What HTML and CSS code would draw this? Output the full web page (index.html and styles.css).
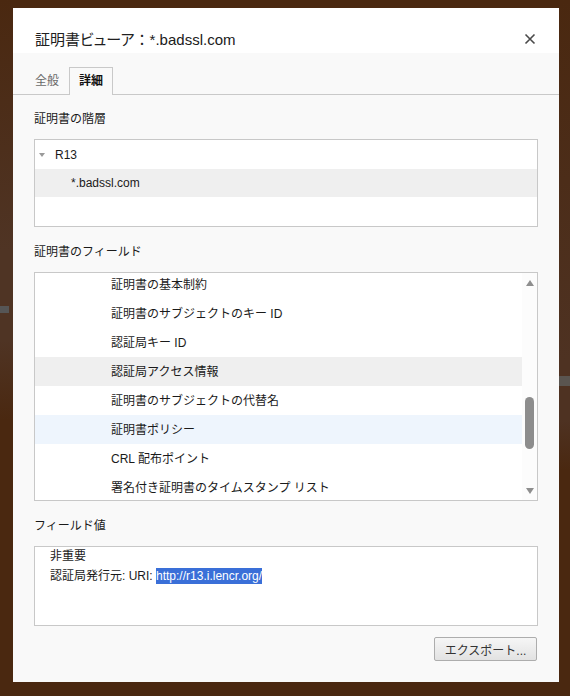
FILE: index.html
```html
<!DOCTYPE html>
<html lang="ja">
<head>
<meta charset="utf-8">
<title>証明書ビューア</title>
<link rel="stylesheet" href="styles.css">
</head>
<body>
<div class="dialog">
  <div class="header">
    <div class="title">証明書ビューア<span class="colon">：</span>*.badssl.com</div>
    <svg class="close" width="12" height="12" viewBox="0 0 12 12"><path d="M1.5 1.5 L10.5 10.5 M10.5 1.5 L1.5 10.5" stroke="#4a4a4a" stroke-width="1.6" fill="none"/></svg>
  </div>
  <div class="tabs">
    <div class="tab">全般</div>
    <div class="tab active">詳細</div>
  </div>
  <div class="content">
    <div class="label">証明書の階層</div>
    <div class="box tree">
      <div class="row"><span class="tri"></span><span>R13</span></div>
      <div class="row sel child">*.badssl.com</div>
    </div>

    <div class="label">証明書のフィールド</div>
    <div class="box fields">
      <div class="list">
        <div class="frow first">証明書の基本制約</div>
        <div class="frow">証明書のサブジェクトのキー ID</div>
        <div class="frow">認証局キー ID</div>
        <div class="frow gray">認証局アクセス情報</div>
        <div class="frow">証明書のサブジェクトの代替名</div>
        <div class="frow blue">証明書ポリシー</div>
        <div class="frow">CRL 配布ポイント</div>
        <div class="frow">署名付き証明書のタイムスタンプ リスト</div>
      </div>
      <div class="scrollbar">
        <div class="arrow up"></div>
        <div class="track"><div class="thumb"></div></div>
        <div class="arrow down"></div>
      </div>
    </div>

    <div class="label">フィールド値</div>
    <div class="box value">
      <div class="vtext">
        <div>非重要</div>
        <div>認証局発行元: URI: <span class="hl">http://r13.i.lencr.org/</span></div>
      </div>
    </div>

    <div class="actions">
      <button class="btn">エクスポート...</button>
    </div>
  </div>
</div>
</body>
</html>
```
FILE: styles.css
```css
* { box-sizing: border-box; }
html, body { margin: 0; }
body {
  width: 570px;
  height: 696px;
  padding: 8px 11px 14px 13px;
  background:
    linear-gradient(#565656, #565656) 0 306px / 9px 7px no-repeat,
    linear-gradient(#5a5550, #5a5550) 559px 376px / 11px 10px no-repeat,
    linear-gradient(to bottom, #4a2810 0, #4f3424 250px, #4f3424 340px, #4a2810 420px) 0 0 / 13px 696px no-repeat,
    linear-gradient(to bottom, #4a2810 0, #4e3222 360px, #4e3222 420px, #4a2810 470px) 559px 0 / 11px 696px no-repeat,
    #4a2810;
  font-family: "Liberation Sans", "Noto Sans CJK JP", sans-serif;
  color: #1a1a1a;
  font-size: 12px;
}
.dialog {
  width: 546px;
  height: 674px;
  background: #f9f9f9;
  display: flex;
  flex-direction: column;
}
.header {
  height: 45px;
  background: #ffffff;
  display: flex;
  align-items: center;
  justify-content: space-between;
  padding: 20px 23px 0 22px;
}
.title {
  font-size: 15px;
  line-height: 20px;
  color: #202020;
  margin-top: -2px;
  font-feature-settings: "palt";
}
.title .colon { font-feature-settings: normal; }
.close { display: block; margin-top: -3px; }
.tabs {
  height: 42px;
  display: flex;
  align-items: flex-end;
  border-bottom: 1px solid #c9c9c9;
  padding-left: 22px;
}
.tab {
  height: 27px;
  line-height: 26px;
  color: #6a6a6a;
  margin-bottom: -1px;
}
.tab.active {
  margin-left: 10px;
  width: 44px;
  height: 28px;
  text-align: center;
  color: #111;
  font-weight: bold;
  background: #f9f9f9;
  border: 1px solid #c9c9c9;
  border-bottom: none;
}
.content {
  padding: 0 21px 0 21px;
  display: flex;
  flex-direction: column;
}
.label {
  line-height: 18px;
  height: 16px;
  margin-top: 16px;
  margin-bottom: 13px;
  color: #1a1a1a;
}
.content > .label:first-child { margin-top: 15px; }
.box {
  background: #ffffff;
  border: 1px solid #c8c8c8;
}
.tree { height: 88px; }
.row {
  height: 29px;
  display: flex;
  align-items: center;
  padding-left: 3px;
}
.row.sel { background: #efefef; }
.row.child { padding-left: 36px; height: 28px; }
.tri {
  width: 0; height: 0;
  border-left: 3.5px solid transparent;
  border-right: 3.5px solid transparent;
  border-top: 4px solid #9a9a9a;
  margin: 1px 10px 0 1px;
}
.fields {
  height: 229px;
  display: flex;
  overflow: hidden;
}
.list { flex: 1; overflow: hidden; }
.frow {
  height: 29px;
  line-height: 27px;
  padding-top: 2px;
  padding-left: 76px;
  white-space: nowrap;
}
.frow.first { margin-top: -3px; }
.frow.gray { background: #efefef; }
.frow.blue { background: #eef5fd; }
.scrollbar {
  width: 15px;
  background: #fcfcfc;
  display: flex;
  flex-direction: column;
  align-items: center;
}
.arrow {
  width: 0; height: 0;
  border-left: 4.5px solid transparent;
  border-right: 4.5px solid transparent;
}
.arrow.up { border-bottom: 6px solid #8e8e8e; margin-top: 7px; }
.arrow.down { border-top: 6px solid #8e8e8e; margin-bottom: 6px; }
.track {
  flex: 1;
  width: 100%;
  display: flex;
  flex-direction: column;
  align-items: center;
  padding-top: 111px;
}
.thumb {
  width: 9px;
  height: 52px;
  border-radius: 5px;
  background: #8d8d8d;
}
.value { height: 80px; }
.vtext {
  padding-left: 15px;
  line-height: 20px;
  margin-top: -1px;
}
.hl {
  background: #3a6fd8;
  color: #ffffff;
  padding: 1px 0;
}
.actions {
  display: flex;
  justify-content: flex-end;
  margin-top: 11px;
  padding-right: 1px;
}
.btn {
  width: 103px;
  height: 24px;
  font-family: inherit;
  font-size: 12px;
  color: #333;
  border: 1px solid #adadad;
  border-radius: 2px;
  background: linear-gradient(#f6f6f6, #e2e2e2);
  padding: 0;
}
```
